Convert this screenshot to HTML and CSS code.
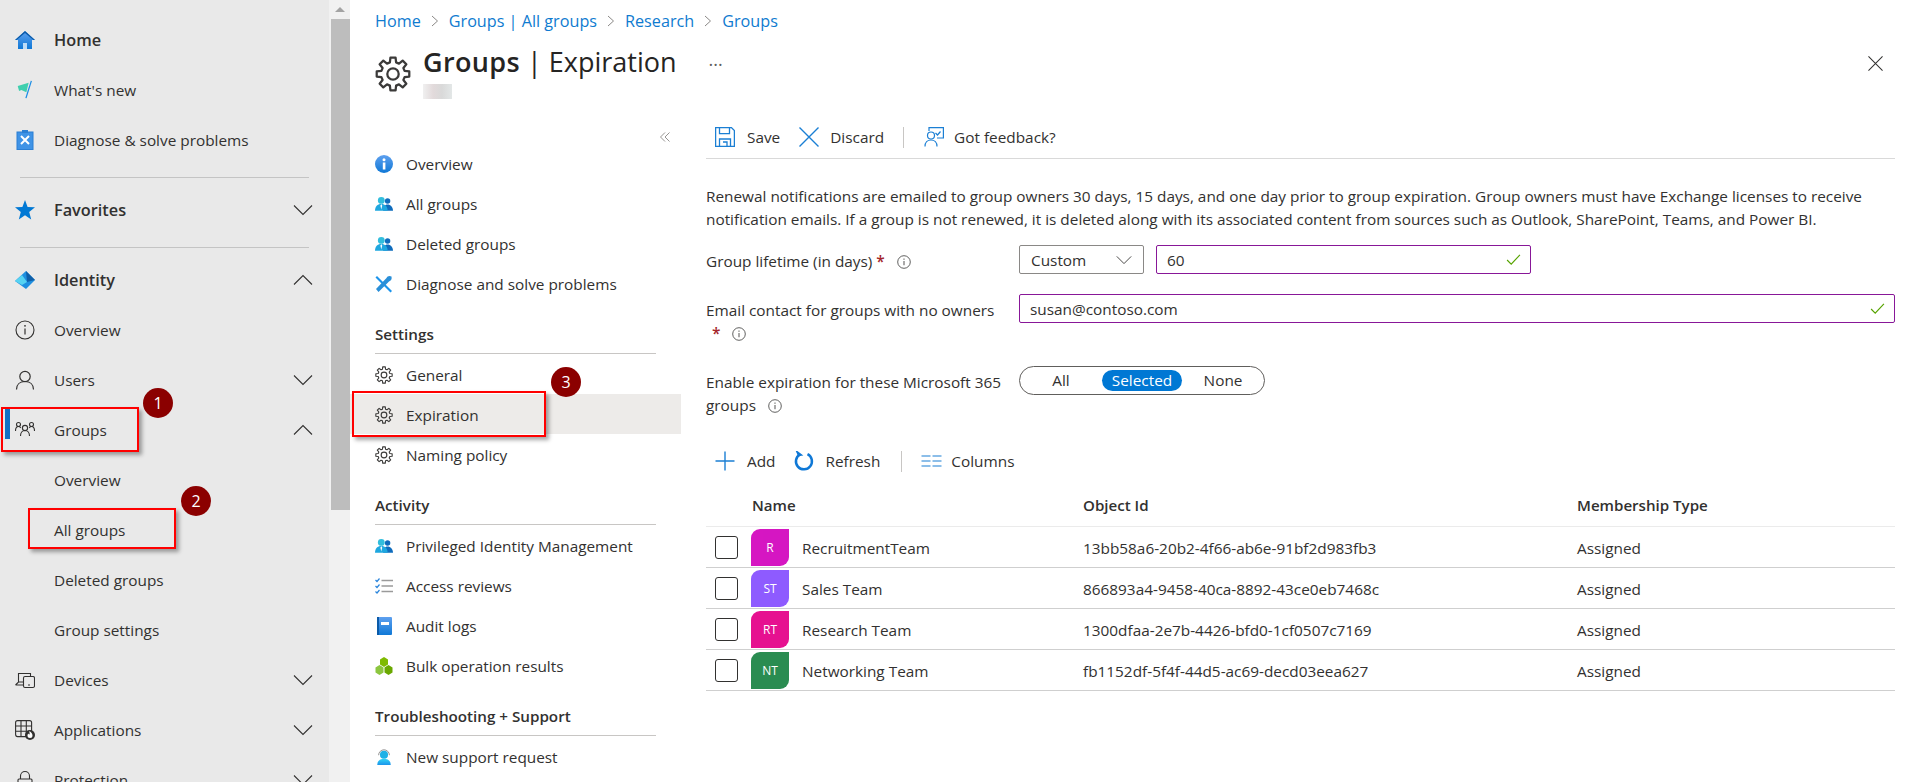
FILE: index.html
```html
<!DOCTYPE html>
<html lang="en">
<head>
<meta charset="utf-8">
<title>Groups | Expiration</title>
<link rel="stylesheet" href="styles.css">
</head>
<body>
<svg class="defs" aria-hidden="true">
  <defs>
    <linearGradient id="gb" x1="0" y1="0" x2="0" y2="1"><stop offset="0" stop-color="#5ea0ef"/><stop offset="1" stop-color="#0f78d6"/></linearGradient>
    <linearGradient id="gc" x1="0" y1="0" x2="0" y2="1"><stop offset="0" stop-color="#32d4f5"/><stop offset="1" stop-color="#1b93eb"/></linearGradient>
    <symbol id="gear" viewBox="0 0 24 24">
      <polygon points="19.73,9.93 22.86,10.28 22.86,13.72 19.73,14.07 18.93,16 20.9,18.46 18.46,20.9 16,18.93 14.07,19.73 13.72,22.86 10.28,22.86 9.93,19.73 8,18.93 5.54,20.9 3.1,18.46 5.07,16 4.27,14.07 1.14,13.72 1.14,10.28 4.27,9.93 5.07,8 3.1,5.54 5.54,3.1 8,5.07 9.93,4.27 10.28,1.14 13.72,1.14 14.07,4.27 16,5.07 18.46,3.1 20.9,5.54 18.93,8" fill="none" stroke="#3b3a39" stroke-width="1.5" stroke-linejoin="round"/>
      <circle cx="12" cy="12" r="3.8" fill="none" stroke="#3b3a39" stroke-width="1.5"/>
    </symbol>
    <symbol id="people" viewBox="0 0 20 16">
      <circle cx="14" cy="4.600" r="3" fill="#0f6cbd"/>
      <path d="M9 15.500c0-4 1.800-6.900 5-6.900s6 2.900 6 6.900z" fill="#0f6cbd"/>
      <circle cx="7" cy="4" r="3.800" fill="#32bedd"/>
      <path d="M0 15.500c0-5 2.600-7.600 7-7.600s7 2.600 7 7.600z" fill="#1ea7df"/>
      <path d="M7 8l-1 2 1 4 1-4z" fill="#fff"/>
    </symbol>
    <symbol id="chev-down" viewBox="0 0 20 12"><path d="M1 1.500l9 9 9-9" fill="none" stroke="#323130" stroke-width="1.100"/></symbol>
    <symbol id="chev-up" viewBox="0 0 20 12"><path d="M1 10.500l9-9 9 9" fill="none" stroke="#323130" stroke-width="1.100"/></symbol>
    <symbol id="sep" viewBox="0 0 8 12"><path d="M1 1l5.500 5L1 11" fill="none" stroke="#8a8886" stroke-width="1"/></symbol>
    <symbol id="info" viewBox="0 0 20 20"><circle cx="10" cy="10" r="9" fill="none" stroke="#323130" stroke-width="1.100"/><path d="M10 8.600v6" stroke="#323130" stroke-width="1.200"/><circle cx="10" cy="5.800" r=".9" fill="#323130"/></symbol>
    <symbol id="check" viewBox="0 0 16 12"><path d="M1 6.500l4.500 4.500L15 1" fill="none" stroke="#57a300" stroke-width="1.300"/></symbol>
  </defs>
</svg>

<div class="app">
  <aside class="nav">
    <a class="nav-item strong">
      <svg class="nav-ico" viewBox="0 0 20 20"><path d="M10 1L0 10h3v9h14v-9h3z" fill="url(#gb)"/><path d="M10 1L0 10h1.600L10 3l8.400 7H20z" fill="#0a5aa8"/><rect x="8" y="13" width="4" height="6" fill="#bcdcf7"/></svg>
      <span>Home</span>
    </a>
    <a class="nav-item">
      <svg class="nav-ico" viewBox="0 0 20 22"><path d="M2 6.500l12-3.500-2.500 10.500L6 11 3.500 12z" fill="#3fcfae"/><path d="M17 1L11 20" stroke="#1b8de6" stroke-width="1.400"/></svg>
      <span>What's new</span>
    </a>
    <a class="nav-item">
      <svg class="nav-ico" viewBox="0 0 20 20"><rect x="2" y="2" width="16" height="17.500" fill="#3f93e6" stroke="#2b7fd4"/><rect x="7" y="0" width="6" height="3" fill="#2b7fd4"/><path d="M6 6l8 8M14 6l-8 8" stroke="#fff" stroke-width="2"/></svg>
      <span>Diagnose &amp; solve problems</span>
    </a>
    <div class="nav-rule"></div>
    <a class="nav-item strong">
      <svg class="nav-ico" viewBox="0 0 20 20"><polygon points="10,0 12.600,7 20,7.300 14.200,11.900 16.200,19.500 10,15.200 3.800,19.500 5.800,11.900 0,7.300 7.400,7" fill="#0078d4"/></svg>
      <span>Favorites</span>
      <svg class="nav-chev"><use href="#chev-down"/></svg>
    </a>
    <div class="nav-rule"></div>
    <a class="nav-item strong">
      <svg class="nav-ico" viewBox="0 0 20 18"><polygon points="11,0 20,9 11,18 0,10" fill="#1f8fe0"/><polygon points="11,0 20,9 12,11" fill="#0f5fa8"/><polygon points="0,10 7,4 12,11 7,14" fill="#56d3f2"/></svg>
      <span>Identity</span>
      <svg class="nav-chev"><use href="#chev-up"/></svg>
    </a>
    <a class="nav-item">
      <svg class="nav-ico"><use href="#info"/></svg>
      <span>Overview</span>
    </a>
    <a class="nav-item">
      <svg class="nav-ico" viewBox="0 0 20 20"><circle cx="10" cy="6.500" r="5.200" fill="none" stroke="#323130" stroke-width="1.200"/><path d="M1.500 19.500c0-5 3.500-8 8.500-8s8.500 3 8.500 8" fill="none" stroke="#323130" stroke-width="1.200"/></svg>
      <span>Users</span>
      <svg class="nav-chev"><use href="#chev-down"/></svg>
    </a>
    <a class="nav-item current">
      <svg class="nav-ico" viewBox="0 0 20 18"><g fill="none" stroke="#323130" stroke-width="1.100"><circle cx="3.500" cy="3.500" r="2"/><circle cx="16.500" cy="3.500" r="2"/><circle cx="10" cy="7" r="2.600"/><path d="M0.500 10c0-2.500 1-4.500 3-4.500 1 0 1.700.5 2.300 1.300M19.500 10c0-2.500-1-4.500-3-4.500-1 0-1.700.5-2.300 1.300M5.500 15c0-3 1.700-5.500 4.500-5.500s4.500 2.500 4.500 5.500"/></g></svg>
      <span>Groups</span>
      <svg class="nav-chev"><use href="#chev-up"/></svg>
    </a>
    <a class="nav-item"><span class="nav-ico"></span><span>Overview</span></a>
    <a class="nav-item"><span class="nav-ico"></span><span>All groups</span></a>
    <a class="nav-item"><span class="nav-ico"></span><span>Deleted groups</span></a>
    <a class="nav-item"><span class="nav-ico"></span><span>Group settings</span></a>
    <a class="nav-item">
      <svg class="nav-ico" viewBox="0 0 20 16"><g fill="none" stroke="#323130" stroke-width="1.100"><path d="M3.500 10V1.500h12V4M0.500 13l3-3h5M0.500 13h8"/><rect x="8.500" y="4.500" width="11" height="11" rx="1.500"/><path d="M13 13h2"/></g></svg>
      <span>Devices</span>
      <svg class="nav-chev"><use href="#chev-down"/></svg>
    </a>
    <a class="nav-item">
      <svg class="nav-ico" viewBox="0 0 20 20"><g fill="none" stroke="#323130" stroke-width="1.100"><rect x=".6" y=".6" width="16" height="16" rx="2"/><path d="M.6 6h16M.6 11.300h16M6 .6v16M11.300 .6v16"/></g><circle cx="15" cy="15" r="5" fill="#323130"/><path d="M15 11.500c1.800 1.500 2.500 2.700 2.500 4a2.500 2.500 0 0 1-5 0c0-1 .5-1.500 1-2 .2.700.5 1 1 1 .3-1 .2-2-.5-3z" fill="#fff"/></svg>
      <span>Applications</span>
      <svg class="nav-chev"><use href="#chev-down"/></svg>
    </a>
    <a class="nav-item">
      <svg class="nav-ico" viewBox="0 0 20 20"><g fill="none" stroke="#323130" stroke-width="1.100"><rect x="3" y="9" width="14" height="10.500" rx="1"/><path d="M5.500 9V6a4.500 4.500 0 0 1 9 0v3"/></g></svg>
      <span>Protection</span>
      <svg class="nav-chev"><use href="#chev-down"/></svg>
    </a>
  </aside>

  <div class="scrollbar">
    <div class="scroll-btn"><span class="scroll-arrow"></span></div>
    <div class="scroll-thumb"></div>
  </div>

  <main class="main">
    <nav class="crumbs">
      <a>Home</a><svg class="crumb-sep"><use href="#sep"/></svg>
      <a>Groups | All groups</a><svg class="crumb-sep"><use href="#sep"/></svg>
      <a>Research</a><svg class="crumb-sep"><use href="#sep"/></svg>
      <a>Groups</a>
    </nav>

    <header class="head">
      <svg class="head-gear"><use href="#gear"/></svg>
      <div class="head-text">
        <h1 class="title"><b>Groups</b> | Expiration</h1>
        <div class="subtitle"></div>
      </div>
      <span class="more">···</span>
      <svg class="close" viewBox="0 0 16 16"><path d="M.5.5l15 15M15.500.5l-15 15" stroke="#323130" stroke-width="1.100"/></svg>
    </header>

    <div class="body">
      <section class="menu">
        <div class="collapse"><svg class="collapse-ico" viewBox="0 0 10 10"><path d="M5 .5L.5 5 5 9.500M9.500 .5L5 5l4.500 4.500" fill="none" stroke="#8a8886" stroke-width=".9"/></svg></div>
        <a class="menu-item"><svg class="menu-ico" viewBox="0 0 18 18"><circle cx="9" cy="9" r="9" fill="url(#gb)"/><rect x="7.800" y="7.500" width="2.600" height="7" fill="#fff"/><circle cx="9" cy="4.800" r="1.500" fill="#fff"/></svg><span>Overview</span></a>
        <a class="menu-item"><svg class="menu-ico"><use href="#people"/></svg><span>All groups</span></a>
        <a class="menu-item"><svg class="menu-ico"><use href="#people"/></svg><span>Deleted groups</span></a>
        <a class="menu-item"><svg class="menu-ico" viewBox="0 0 18 18"><path d="M2 1l15 15-1.500 1.500L.5 2.500z" fill="#1b93eb"/><path d="M16.500 1.500c-2-1.200-4.300-.5-5 1.500L1 14l2.500 3L14 6.500c2-.5 3.200-2.500 2.500-5z" fill="#2a8fd8"/></svg><span>Diagnose and solve problems</span></a>

        <h2 class="menu-head">Settings</h2>
        <a class="menu-item"><svg class="menu-ico"><use href="#gear"/></svg><span>General</span></a>
        <a class="menu-item active"><svg class="menu-ico"><use href="#gear"/></svg><span>Expiration</span></a>
        <a class="menu-item"><svg class="menu-ico"><use href="#gear"/></svg><span>Naming policy</span></a>

        <h2 class="menu-head">Activity</h2>
        <a class="menu-item"><svg class="menu-ico"><use href="#people"/></svg><span>Privileged Identity Management</span></a>
        <a class="menu-item"><svg class="menu-ico" viewBox="0 0 18 16"><path d="M.5 2l1.500 1.500L4.500.5M.5 8l1.500 1.500L4.500 6.500M.5 13.500L2 15l2.500-3" fill="none" stroke="#2a85dc" stroke-width="1.200"/><path d="M6.500 2.500H18M6.500 8H18M6.500 13.500H18" stroke="#9a9a9a" stroke-width="1.500"/></svg><span>Access reviews</span></a>
        <a class="menu-item"><svg class="menu-ico" viewBox="0 0 18 18"><rect x="2" y="0" width="15" height="18" rx="1" fill="url(#gb)"/><rect x="2" y="0" width="2" height="18" fill="#0a5aa8"/><rect x="6" y="5" width="8" height="3" fill="#fff"/></svg><span>Audit logs</span></a>
        <a class="menu-item"><svg class="menu-ico" viewBox="0 0 18 18"><polygon points="9,0 13,2.500 13,7.500 9,10 5,7.500 5,2.500" fill="#7fba00"/><polygon points="4.500,8 8.500,10.500 8.500,15.500 4.500,18 .5,15.500 .5,10.500" fill="#8cc63f"/><polygon points="13.500,8 17.500,10.500 17.500,15.500 13.500,18 9.500,15.500 9.500,10.500" fill="#6aa800"/></svg><span>Bulk operation results</span></a>

        <h2 class="menu-head">Troubleshooting + Support</h2>
        <a class="menu-item"><svg class="menu-ico" viewBox="0 0 18 20"><path d="M3 8a6 6 0 0 1 12 0" fill="none" stroke="#8a8886" stroke-width="1"/><circle cx="9" cy="7.500" r="4.500" fill="#1eb1e6"/><path d="M1.500 19c0-4 2.500-7 7.500-7s7.500 3 7.500 7z" fill="url(#gc)"/></svg><span>New support request</span></a>
      </section>

      <section class="content">
        <div class="toolbar top">
          <a class="tool"><svg class="tool-ico" viewBox="0 0 20 20"><g fill="none" stroke="#1b7fd4" stroke-width="1.300"><path d="M.6.6h15.800l3 3v15.800H.6z"/><path d="M4.500.6v6h10v-6M4.500 19.400V12h11v7.400M8 15h4v4.400"/></g></svg><span>Save</span></a>
          <a class="tool discard"><svg class="tool-ico" viewBox="0 0 20 20"><path d="M.5.5l19 19M19.500.5l-19 19" stroke="#1b7fd4" stroke-width="1.400"/></svg><span>Discard</span></a>
          <span class="tool-sep"></span>
          <a class="tool feedback"><svg class="tool-ico" viewBox="0 0 20 20"><g fill="none" stroke="#1b7fd4" stroke-width="1.200"><circle cx="7" cy="8.500" r="3.500"/><path d="M1 19.500c0-4 2.500-6.500 6-6.500s6 2.500 6 6.500M5 4V.6h14.400V11H13M11.500 6l2 2 3-3.500"/></g></svg><span>Got feedback?</span></a>
        </div>

        <p class="notice">Renewal notifications are emailed to group owners 30 days, 15 days, and one day prior to group expiration. Group owners must have Exchange licenses to receive<br>notification emails. If a group is not renewed, it is deleted along with its associated content from sources such as Outlook, SharePoint, Teams, and Power BI.</p>

        <div class="form">
          <div class="label">Group lifetime (in days) <span class="req">*</span> <svg class="hint"><use href="#info"/></svg></div>
          <div class="field-row">
            <div class="select"><span>Custom</span><svg class="select-chev"><use href="#chev-down"/></svg></div>
            <div class="input short"><span>60</span><svg class="ok"><use href="#check"/></svg></div>
          </div>

          <div class="label tall">Email contact for groups with no owners<br><span class="req indent">*</span> <svg class="hint"><use href="#info"/></svg></div>
          <div class="input"><span>susan@contoso.com</span><svg class="ok"><use href="#check"/></svg></div>

          <div class="label">Enable expiration for these Microsoft 365<br>groups <svg class="hint"><use href="#info"/></svg></div>
          <div class="toggle"><span>All</span><span class="on">Selected</span><span>None</span></div>
        </div>

        <div class="toolbar second">
          <a class="tool"><svg class="tool-ico" viewBox="0 0 20 20"><path d="M10 .5v19M.5 10h19" stroke="#1b7fd4" stroke-width="1.400"/></svg><span>Add</span></a>
          <a class="tool refresh"><svg class="tool-ico" viewBox="0 0 20 20"><path d="M13.500 3.200A8 8 0 1 1 6 3.400" fill="none" stroke="#0f78d6" stroke-width="2.500"/><path d="M2.800 0.500L7.500 4l-3 .5z" fill="#0f78d6" stroke="#0f78d6" stroke-width="1.500"/></svg><span>Refresh</span></a>
          <span class="tool-sep"></span>
          <a class="tool columns"><svg class="tool-ico" viewBox="0 0 20 12"><path d="M0 1h9M11 1h9M0 6h9M11 6h9M0 11h9M11 11h9" stroke="#1b7fd4" stroke-width="1.200"/></svg><span>Columns</span></a>
        </div>

        <div class="table">
          <div class="row header"><span></span><span>Name</span><span>Object Id</span><span>Membership Type</span></div>
          <div class="row">
            <span class="box"></span>
            <span class="name"><span class="avatar magenta">R</span>RecruitmentTeam</span>
            <span>13bb58a6-20b2-4f66-ab6e-91bf2d983fb3</span><span>Assigned</span>
          </div>
          <div class="row">
            <span class="box"></span>
            <span class="name"><span class="avatar violet">ST</span>Sales Team</span>
            <span>866893a4-9458-40ca-8892-43ce0eb7468c</span><span>Assigned</span>
          </div>
          <div class="row">
            <span class="box"></span>
            <span class="name"><span class="avatar pink">RT</span>Research Team</span>
            <span>1300dfaa-2e7b-4426-bfd0-1cf0507c7169</span><span>Assigned</span>
          </div>
          <div class="row">
            <span class="box"></span>
            <span class="name"><span class="avatar green">NT</span>Networking Team</span>
            <span>fb1152df-5f4f-44d5-ac69-decd03eea627</span><span>Assigned</span>
          </div>
        </div>
      </section>
    </div>
  </main>
</div>

<div class="mark box-one"></div>
<div class="mark box-two"></div>
<div class="mark box-three"></div>
<div class="badge badge-one">1</div>
<div class="badge badge-two">2</div>
<div class="badge badge-three">3</div>
</body>
</html>
```

FILE: styles.css
```css
* { box-sizing: border-box; }
html, body { margin: 0; height: 782px; overflow: hidden; background: #fff; }
body {
  font-family: "Open Sans", "Noto Sans", "Liberation Sans", sans-serif;
  font-size: 15.35px;
  color: #323130;
  position: relative;
}
.defs { position: absolute; width: 0; height: 0; }
a { color: inherit; text-decoration: none; }
.app { display: flex; height: 782px; }

/* left navigation */
.nav { width: 329px; flex: none; height: 782px; overflow: hidden; background: #e9e9e9; padding-top: 15px; }
.nav-item { position: relative; display: flex; align-items: center; height: 50px; padding: 0 16px 0 15px; }
.nav-ico { width: 20px; height: 20px; flex: none; margin-right: 19px; }
.nav-chev { width: 20px; height: 12px; margin-left: auto; }
.strong { font-weight: 600; font-size: 16.3px; }
.nav-rule { height: 1px; margin: 12px 20px 7px; background: #c4c4c4; }
.current::before { content: ""; position: absolute; left: 5px; top: 4px; width: 5px; height: 30px; background: #1170c4; }

/* scrollbar */
.scrollbar { width: 21px; flex: none; background: #f1f1f1; }
.scroll-btn { height: 19px; display: flex; align-items: center; justify-content: center; }
.scroll-arrow { border: 5px solid transparent; border-top: 0; border-bottom: 5px solid #a3a3a3; }
.scroll-thumb { height: 491px; margin-left: 2px; background: #bdbdbd; }

/* main */
.main { flex: 1; min-width: 0; }
.crumbs { height: 42px; padding-left: 25px; display: flex; align-items: center; color: #0f7bd0; font-size: 16.2px; }
.crumb-sep { width: 8px; height: 12px; margin: 0 10px; }
.head { height: 76px; display: flex; align-items: flex-start; padding-left: 25px; padding-right: 37px; }
.head-gear { width: 36px; height: 36px; margin-top: 14px; flex: none; }
.head-text { margin-left: 12px; }
.title { margin: 2px 0 0; font-size: 27px; line-height: 36px; font-weight: 400; color: #252423; white-space: nowrap; }
.title b { font-weight: 600; letter-spacing: .35px; }
.subtitle { width: 29px; height: 15px; margin-top: 4px; background: linear-gradient(90deg, #f0f0f0, #e2dadb 35%, #d9d9d9 65%, #e3e7e7); }
.more { margin: 10px 0 0 32px; font-size: 18px; color: #605e5c; }
.close { width: 15px; height: 15px; margin: 14px 0 0 auto; }

.body { display: flex; gap: 25px; padding-right: 25px; }
.menu { width: 331px; flex: none; }
.collapse { height: 25px; padding: 14px 11px 0 0; display: flex; justify-content: flex-end; }
.collapse-ico { width: 10px; height: 10px; }
.menu-item { display: flex; align-items: center; height: 40px; padding: 2px 0 0 25px; }
.menu-item.active { background: #edebe9; }
.menu-ico { width: 18px; height: 18px; margin-right: 13px; flex: none; }
.menu-head { margin: 21px 25px 0; padding-bottom: 9px; border-bottom: 1px solid #c8c6c4; font-size: 15.2px; line-height: 20px; font-weight: 600; }

.content { flex: 1; min-width: 0; }
.toolbar { display: flex; align-items: center; height: 40px; padding-left: 9px; }
.toolbar.top { height: 41px; padding-bottom: 2px; border-bottom: 1px solid #d9d9d9; }
.tool { display: flex; align-items: center; margin-right: 19px; }
.tool-ico { width: 20px; height: 20px; margin-right: 12px; flex: none; }
.discard { margin-right: 19px; }
.discard .tool-ico { margin-right: 11px; }
.feedback .tool-ico { margin-right: 10px; }
.refresh { margin-right: 21px; }
.refresh .tool-ico { margin-right: 11px; }
.columns .tool-ico { width: 21px; height: 12px; margin-right: 9px; }
.tool-sep { width: 1px; height: 21px; background: #c8c6c4; margin-right: 20px; }
.second .tool-sep { margin-right: 19px; }

.notice { margin: 26px 0 0; line-height: 23px; white-space: nowrap; }
.form { display: grid; grid-template-columns: 313px 1fr; row-gap: 20px; margin-top: 14px; }
.label { padding-top: 5px; line-height: 23px; }
.label.tall { padding-bottom: 1px; }
.req { color: #a4262c; font-weight: 600; }
.indent { margin-left: 6px; }
.hint { width: 14px; height: 14px; margin-left: 8px; vertical-align: -2px; }
.field-row { display: flex; gap: 12px; }
.select { width: 125px; height: 29px; border: 1px solid #8a8886; border-radius: 2px; display: flex; align-items: center; justify-content: space-between; padding: 0 11px; }
.select-chev { width: 16px; height: 10px; }
.input { height: 29px; border: 1px solid #881798; border-radius: 2px; display: flex; align-items: center; justify-content: space-between; padding: 0 9px 0 10px; }
.input.short { width: 375px; }
.ok { width: 15px; height: 11px; }
.toggle { width: 246px; height: 29px; border: 1px solid #605e5c; border-radius: 15px; padding: 3px 1px; display: grid; grid-template-columns: repeat(3, 80px); column-gap: 1px; text-align: center; line-height: 21px; }
.toggle .on { background: #0078d4; color: #fff; border-radius: 11px; }

.toolbar.second { margin-top: 24px; }
.row { display: grid; grid-template-columns: 45px 332px 494px 1fr; align-items: center; height: 41px; padding-top: 1px; border-bottom: 1px solid #cfcfcf; }
.row.header { height: 46px; font-size: 15.1px; font-weight: 600; border-bottom-color: #ebebeb; padding-top: 3px; }
.row.header span:nth-child(2) { padding-left: 1px; }
.box { width: 23px; height: 23px; margin-left: 9px; border: 1px solid #323130; border-radius: 3px; }
.name { display: flex; align-items: center; }
.avatar { width: 38px; height: 37px; margin-right: 13px; border-radius: 9px 0 9px 0; color: #fff; opacity: .96; font-size: 12px; display: flex; align-items: center; justify-content: center; }
.magenta { background: #d40dc0; }
.violet { background: #8a55ff; }
.pink { background: #e6088c; }
.green { background: #22884a; }

/* annotations */
.mark { position: absolute; border: 2px solid #f00; box-shadow: 3px 3px 4px rgba(0, 0, 0, .35); }
.box-one { left: 1px; top: 407px; width: 138px; height: 45px; }
.box-two { left: 28px; top: 508px; width: 148px; height: 41px; }
.box-three { left: 352px; top: 391px; width: 194px; height: 46px; }
.badge { position: absolute; width: 30px; height: 30px; border-radius: 50%; background: #8b0000; color: #fff; font-size: 16px; display: flex; align-items: center; justify-content: center; }
.badge-one { left: 143px; top: 388px; }
.badge-two { left: 181px; top: 486px; }
.badge-three { left: 551px; top: 367px; }
```
